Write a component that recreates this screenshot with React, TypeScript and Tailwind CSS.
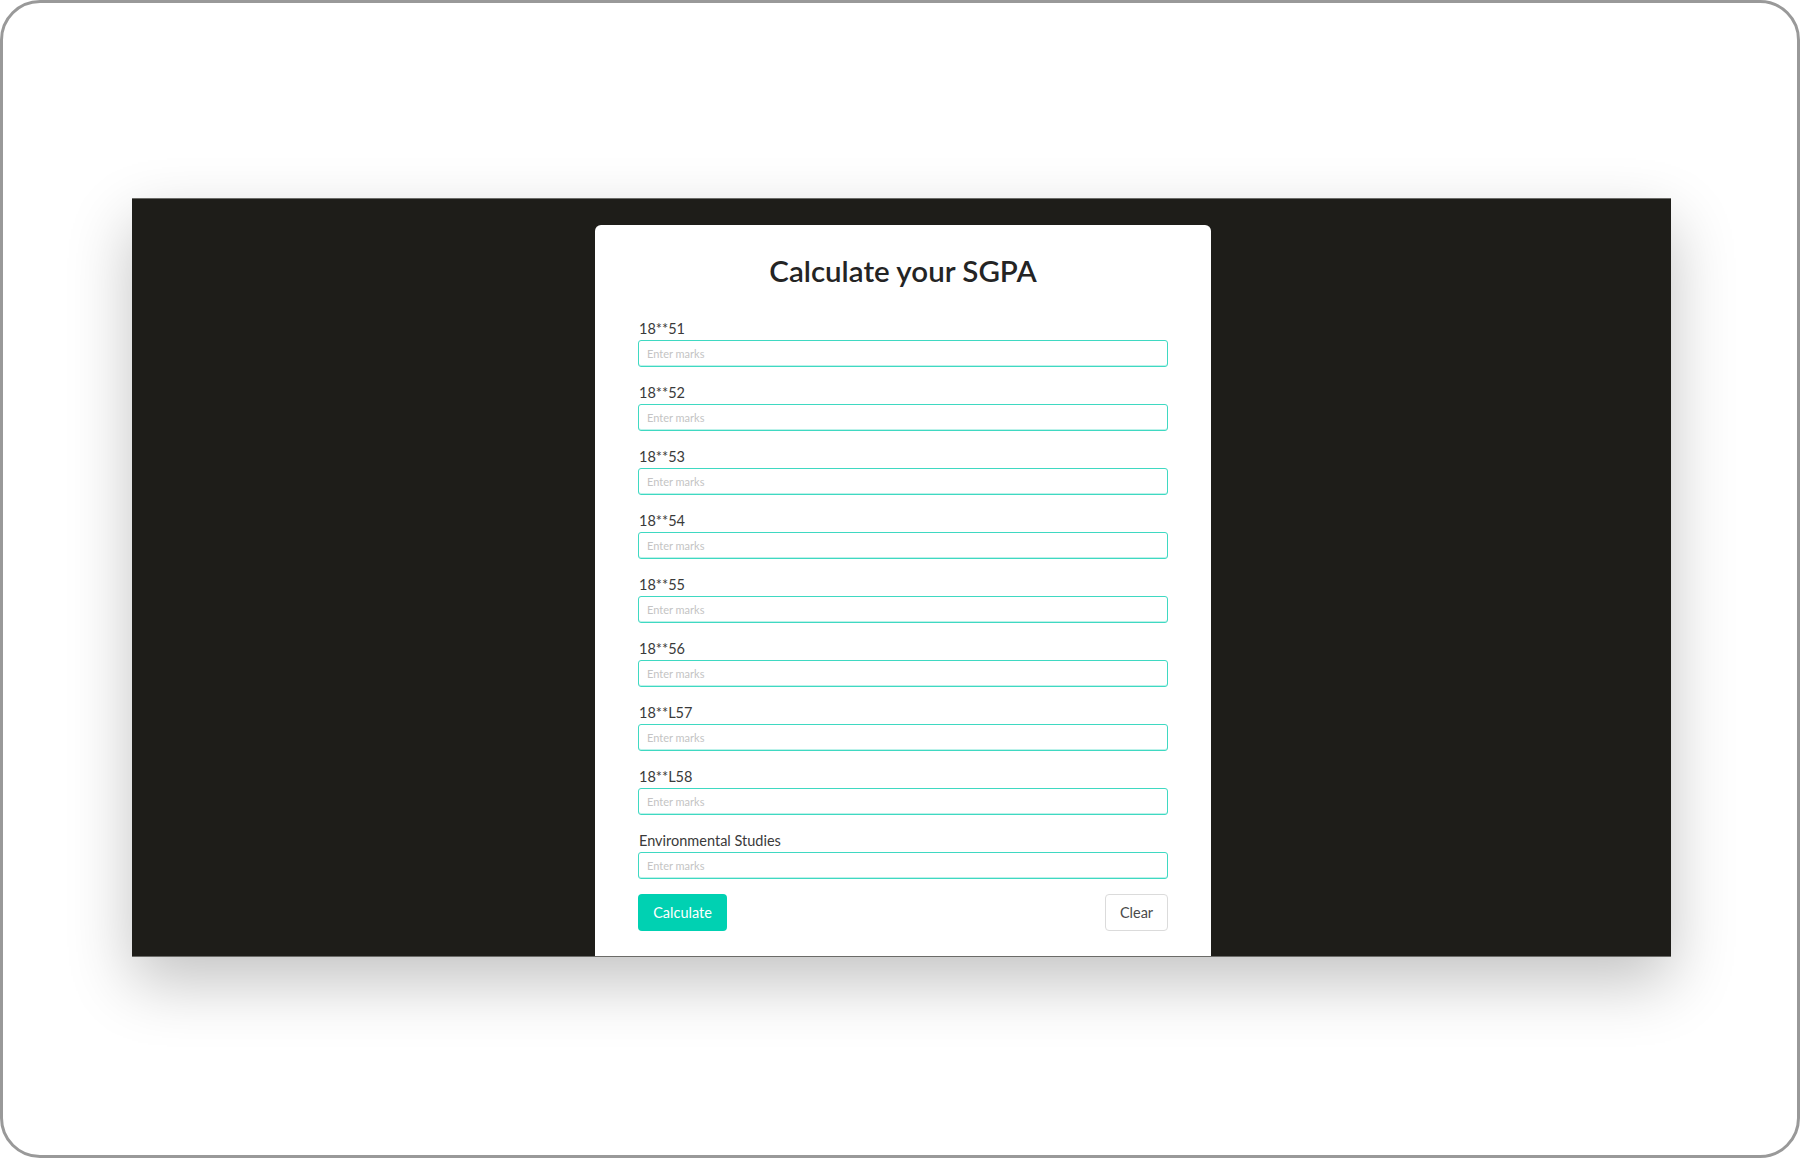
import React from "react";

const subjects = [
  "18**51",
  "18**52",
  "18**53",
  "18**54",
  "18**55",
  "18**56",
  "18**L57",
  "18**L58",
  "Environmental Studies",
];

export default function App() {
  return (
    <div
      className="w-[1800px] h-[1158px] bg-white border-[3px] border-[#999999] rounded-[40px] overflow-hidden pt-[195px] pl-[129px]"
      style={{ fontFamily: "Lato, 'Liberation Sans', sans-serif" }}
    >
      <div className="w-[1539px] h-[759px] bg-[#1e1d19] border-t border-b border-[#6b6b68] overflow-hidden flex shadow-[0_25px_60px_rgba(0,0,0,0.24)]">
        <div className="w-[616px] ml-[463px] mt-[26px] bg-white rounded-[6px] px-[43px] pt-[29px] pb-[30px] self-start shrink-0">
          <h1 className="text-center text-[29.5px] leading-[34px] font-semibold text-[#242424] mb-[32px]">
            Calculate your SGPA
          </h1>
          <div className="flex flex-col gap-[17px]">
            {subjects.map((s) => (
              <div key={s} className="flex flex-col">
                <label className="text-[14.5px] leading-[20px] text-[#3a3a3a] pl-[1px] pb-[1px] -mt-[1px]">{s}</label>
                <input
                  type="text"
                  placeholder="Enter marks"
                  className="h-[27px] w-full border border-[#3fd9c2] rounded-[3px] px-[8px] text-[11px] placeholder:text-[#c4c4c4] outline-none shadow-[inset_0_-1px_0_rgba(63,217,194,0.35)]"
                />
              </div>
            ))}
          </div>
          <div className="flex justify-between items-center mt-[15px]">
            <button className="h-[37px] w-[89px] rounded-[4px] bg-[#00d1b2] text-white text-[14.5px]">
              Calculate
            </button>
            <button className="h-[37px] w-[63px] rounded-[4px] border border-[#dbdbdb] bg-white text-[#4a4a4a] text-[14.5px]">
              Clear
            </button>
          </div>
        </div>
      </div>
    </div>
  );
}
